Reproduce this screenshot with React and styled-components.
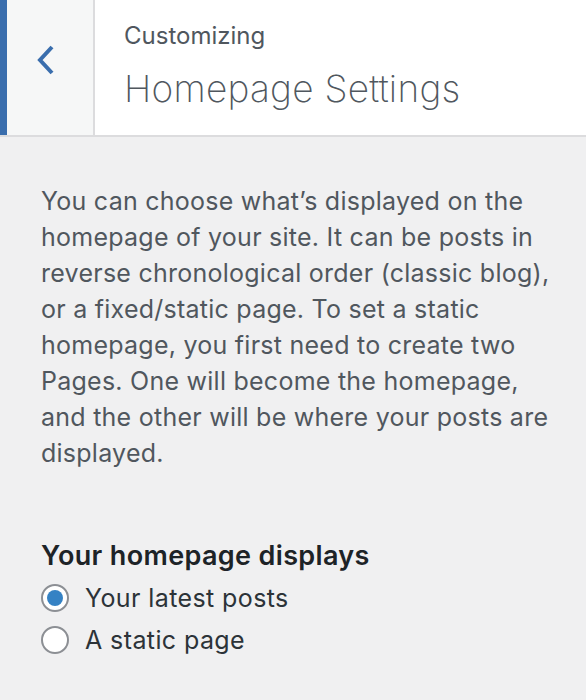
import React from 'react';
import styled, { createGlobalStyle } from 'styled-components';

const GlobalStyle = createGlobalStyle`
  html, body {
    margin: 0;
    padding: 0;
    background: #f0f0f1;
  }
  body {
    font-family: Inter, "Noto Sans", "Liberation Sans", sans-serif;
    -webkit-font-smoothing: antialiased;
  }
`;

const Panel = styled.div`
  width: 586px;
  height: 700px;
  background: #f0f0f1;
  overflow: hidden;
`;

const Header = styled.div`
  display: flex;
  height: 135px;
  background: #fff;
  border-bottom: 2px solid #dcdcde;
`;

const BackButton = styled.button`
  flex: 0 0 auto;
  width: 95px;
  height: 100%;
  padding: 0;
  margin: 0;
  border: 0;
  border-left: 7px solid #3a6ead;
  border-right: 2px solid #dcdcde;
  background: #f6f7f7;
  display: flex;
  align-items: flex-start;
  justify-content: flex-start;
  cursor: pointer;
  box-sizing: border-box;

  svg {
    margin: 44px 0 0 30px;
  }
`;

const TitleBlock = styled.div`
  display: flex;
  flex-direction: column;
  padding: 20px 0 0 29px;
`;

const Action = styled.span`
  font-size: 24px;
  line-height: 32px;
  color: #50575e;
  font-weight: 400;
`;

const Title = styled.h3`
  margin: 13px 0 0;
  font-size: 37px;
  line-height: 48px;
  font-weight: 200;
  color: #50575e;
  letter-spacing: 0.25px;
`;

const Body = styled.div`
  padding: 46px 24px 0 41px;
`;

const Description = styled.p`
  margin: 0;
  font-size: 25px;
  line-height: 36px;
  letter-spacing: 0.25px;
  color: #50575e;
`;

const FieldGroup = styled.fieldset`
  margin: 67px 0 0;
  padding: 0;
  border: 0;
`;

const Legend = styled.legend`
  padding: 0;
  font-size: 27px;
  line-height: 36px;
  font-weight: 600;
  letter-spacing: 0.35px;
  color: #1d2327;
`;

const Option = styled.label`
  display: flex;
  align-items: center;
  gap: 16px;
  height: 42px;
  font-size: 25px;
  letter-spacing: 0.4px;
  color: #2c3338;
  cursor: pointer;

  &:first-of-type {
    margin-top: 3px;
  }
`;

const Radio = styled.span`
  box-sizing: border-box;
  flex: 0 0 auto;
  width: 28px;
  height: 28px;
  border-radius: 50%;
  border: 2px solid #8c8f94;
  background: #fff;
  display: flex;
  align-items: center;
  justify-content: center;

  &::after {
    content: '';
    width: 16px;
    height: 16px;
    border-radius: 50%;
    background: #3582c4;
    display: ${({ checked }) => (checked ? 'block' : 'none')};
  }
`;

const options = [
  { label: 'Your latest posts', checked: true },
  { label: 'A static page', checked: false },
];

export default function App() {
  return (
    <Panel>
      <GlobalStyle />
      <Header>
        <BackButton aria-label="Back">
          <svg width="18" height="32" viewBox="0 0 18 32">
            <path d="M15 3 L3 16 L15 29" fill="none" stroke="#3a6ead" strokeWidth="4" />
          </svg>
        </BackButton>
        <TitleBlock>
          <Action>Customizing</Action>
          <Title>Homepage Settings</Title>
        </TitleBlock>
      </Header>
      <Body>
        <Description>
          You can choose what’s displayed on the homepage of your site. It can be posts in
          reverse chronological order (classic blog), or a fixed/static page. To set a static
          homepage, you first need to create two Pages. One will become the homepage, and the
          other will be where your posts are displayed.
        </Description>
        <FieldGroup>
          <Legend>Your homepage displays</Legend>
          {options.map((o) => (
            <Option key={o.label}>
              <Radio checked={o.checked} />
              {o.label}
            </Option>
          ))}
        </FieldGroup>
      </Body>
    </Panel>
  );
}
